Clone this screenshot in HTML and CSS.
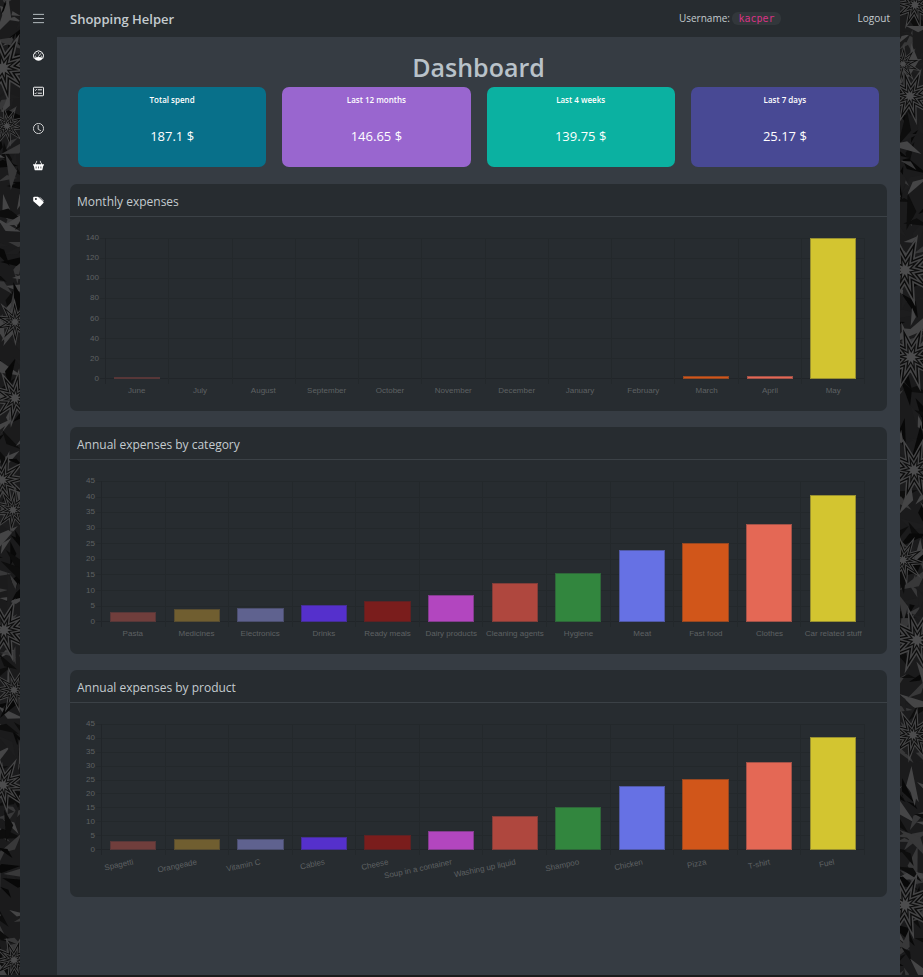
FILE: index.html
```html
<!DOCTYPE html>
<html lang="en">
<head>
<meta charset="utf-8">
<meta name="viewport" content="width=device-width, initial-scale=1">
<title>Shopping Helper</title>
<link rel="stylesheet" href="styles.css">
</head>
<body>
<svg class="backdrop" id="backdrop" aria-hidden="true"></svg>
<div class="app">
  <aside class="sidebar">
    <button class="toggle" type="button" aria-label="Menu">
      <svg class="icon" viewBox="0 0 16 16"><path d="M0 2h16M0 8h16M0 14h16" fill="none" stroke="currentColor" stroke-width="1.3"/></svg>
    </button>
    <nav class="side-nav" aria-label="Main">
      <a href="#dashboard" aria-label="Dashboard"><svg class="icon" viewBox="0 0 16 16"><path d="M1.8 12.5A7.3 7.3 0 1 1 14.2 12.5" fill="none" stroke="currentColor" stroke-width="1.4"/><path d="M1.5 11.2Q8 9.400 14.5 11.2Q12.500 15.600 8 15.600T1.500 11.200Z" fill="currentColor"/><path d="M8 3.200v2M4 5l1.400 1.400M2.600 9h2M11.400 9h2M7.600 9.800l4.200-5" fill="none" stroke="currentColor" stroke-width="1.2"/></svg></a>
      <a href="#list" aria-label="List"><svg class="icon" viewBox="0 0 16 16"><rect x=".7" y="1.800" width="14.600" height="12.400" rx="1.200" fill="none" stroke="currentColor" stroke-width="1.4"/><path d="M7 5.500h6M7 10.500h6M2.600 5.500l1 1 1.900-2M2.600 10.500l1 1 1.900-2" fill="none" stroke="currentColor" stroke-width="1.3"/></svg></a>
      <a href="#history" aria-label="History"><svg class="icon" viewBox="0 0 16 16"><circle cx="8" cy="8" r="7.400" fill="none" stroke="currentColor" stroke-width="1.1"/><path d="M7.500 3v6l4 2.300" fill="none" stroke="currentColor" stroke-width="1.1"/></svg></a>
      <a href="#products" aria-label="Products"><svg class="icon" viewBox="0 0 16 16"><path fill="currentColor" fill-rule="evenodd" d="M5.900 1.100a.5.5 0 0 1 .2.700L3.900 6H12.100L9.900 1.800a.5.5 0 0 1 .9-.5L13.200 6H15.500a.5.5 0 0 1 .5.500v1a.5.5 0 0 1-.5.500H15l-1.300 6a1.500 1.500 0 0 1-1.500 1H3.800a1.500 1.500 0 0 1-1.500-1L1 8H.5a.5.5 0 0 1-.5-.5v-1A.5.5 0 0 1 .5 6h2.300l2.400-4.700a.5.5 0 0 1 .7-.2ZM4 9.500v3h1v-3ZM7.500 9.500v3h1v-3ZM11 9.500v3h1v-3Z"/></svg></a>
      <a href="#categories" aria-label="Categories"><svg class="icon" viewBox="0 0 16 16"><path fill="currentColor" fill-rule="evenodd" d="M2 1h5a1 1 0 0 1 .7.300l7.400 7.200a1.300 1.300 0 0 1 0 1.800l-4.500 4.500a1.300 1.300 0 0 1-1.800 0L.6 7.700A1 1 0 0 1 .3 7V2.700A1.700 1.700 0 0 1 2 1Zm2.200 4.800a1.500 1.500 0 1 0 0-3 1.500 1.500 0 0 0 0 3Z"/><path d="M9.800 1.800l5.600 5.600" stroke="currentColor" stroke-width="1.200"/></svg></a>
    </nav>
  </aside>
  <header class="topbar">
    <a class="brand" href="#dashboard">Shopping Helper</a>
    <span class="user">Username: <code>kacper</code></span>
    <a class="logout" href="#logout">Logout</a>
  </header>
  <main class="content" id="dashboard">
    <h1>Dashboard</h1>
    <section class="stats" aria-label="Totals">
      <article class="stat total"><h2>Total spend</h2><p>187.1 $</p></article>
      <article class="stat year"><h2>Last 12 months</h2><p>146.65 $</p></article>
      <article class="stat month"><h2>Last 4 weeks</h2><p>139.75 $</p></article>
      <article class="stat week"><h2>Last 7 days</h2><p>25.17 $</p></article>
    </section>
    <section class="panel"><h2>Monthly expenses</h2><div class="chart wide-axis" id="monthly"></div></section>
    <section class="panel"><h2>Annual expenses by category</h2><div class="chart" id="category"></div></section>
    <section class="panel"><h2>Annual expenses by product</h2><div class="chart slanted" id="product"></div></section>
  </main>
</div>
<script src="app.js"></script>
</body>
</html>
```
FILE: styles.css
```css
* { box-sizing: border-box; }
body {
  margin: 0;
  background: #1b1b1c;
  color: #c4cbcf;
  font-family: "Open Sans", "Noto Sans", sans-serif;
  font-size: 10px;
  line-height: 16px;
}
h1, h2, p { margin: 0; }
a { color: inherit; text-decoration: none; }
.backdrop { position: fixed; inset: 0; z-index: -1; width: 100%; height: calc(100% - 2px); }
.app {
  display: grid;
  grid-template-columns: 37px minmax(0, 1fr);
  grid-template-rows: 37px 1fr;
  min-height: calc(100vh - 2px);
  margin: 0 23px 2px 20px;
  background: #363c43;
}
.sidebar { grid-row: 1 / 3; background: #272c30; }
.toggle {
  display: grid;
  place-items: center;
  width: 100%;
  height: 37px;
  padding: 0;
  border: 0;
  background: none;
  color: #c4cbcf;
}
.side-nav { display: grid; grid-auto-rows: 1fr; height: 183px; color: #fff; }
.side-nav a { display: grid; place-items: center; }
.icon { display: block; width: 11px; height: 11px; }
.topbar {
  display: flex;
  align-items: center;
  padding: 0 10px 2px 13px;
  background: #272c30;
}
.brand { margin-right: auto; padding-top: 2px; font-size: 13px; font-weight: 600; }
.user { margin-right: 77px; }
code {
  padding: 1px 6px;
  border-radius: 6px;
  background: #32373b;
  color: #d63384;
  font: 10px/12px "DejaVu Sans Mono", monospace;
}
.content { padding: 12px 13px; }
h1 {
  margin-bottom: 2px;
  color: #b9c2c9;
  font-size: 25px;
  font-weight: 600;
  line-height: 36px;
  text-align: center;
}
.stats {
  display: grid;
  grid-template-columns: repeat(4, 1fr);
  gap: 16px;
  margin: 0 8px 17px;
}
.stat { height: 80px; padding-top: 5px; border-radius: 7px; color: #fff; text-align: center; }
.stat h2 { font-size: 8px; font-weight: 600; line-height: 16px; }
.stat p { margin-top: 18px; font-size: 13px; line-height: 20px; }
.total { background: #08708a; }
.year { background: #9966cf; }
.month { background: #0bb1a1; }
.week { background: #484994; }
.panel { margin-bottom: 16px; border-radius: 7px; background: #272c30; }
.panel h2 {
  padding: 9px 7px 5px;
  border-bottom: 1px solid #3b4146;
  font-size: 12px;
  font-weight: 400;
  line-height: 18px;
}

.chart {
  display: grid;
  grid-template-columns: 31px minmax(0, 1fr);
  grid-template-rows: 141px 32px;
  padding: 21px 22px 0 0;
  color: #5e6163;
  font: 8px/10px "Liberation Sans", Arial, sans-serif;
}
.wide-axis { grid-template-columns: 35px minmax(0, 1fr); }
.slanted { grid-template-rows: 126px 47px; }
.axis, .lines, .bars { grid-row: 1; }
.axis {
  grid-column: 1;
  display: flex;
  flex-direction: column;
  justify-content: space-between;
  margin: -5px 6px -5px 0;
  text-align: right;
}
.lines, .bars { grid-column: 2; }
.lines { display: flex; flex-direction: column; margin-left: -5px; border-bottom: 1px solid #212529; }
.lines i { flex: 1; border-top: 1px solid #23282b; }
.bars { display: flex; margin-bottom: -5px; border-left: 1px solid #212529; }
.slot {
  flex: 1;
  display: flex;
  align-items: flex-end;
  justify-content: center;
  padding-bottom: 5px;
  border-right: 1px solid #23282b;
}
.bar { width: 74%; border: 1px solid rgb(39 44 48 / 35%); }
.names { grid-column: 2; display: flex; padding-top: 7px; }
.names span { flex: 1; min-width: 0; display: flex; justify-content: center; white-space: nowrap; }
.slanted .names span { justify-content: flex-end; padding-right: 28px; }
.slanted .names b { transform: rotate(-12deg); transform-origin: right center; }
.names b { font-weight: 400; }
```
FILE: app.js
```js
const colors = ["#703e3c", "#705e30", "#5f628f", "#5530cc", "#7a1d1c", "#b246bf",
  "#af473e", "#32863e", "#6671e4", "#d1561a", "#e46855", "#d3c530"];

function drawChart(id, max, step, names, values) {
  const ticks = [];
  for (let t = max; t >= 0; t -= step) ticks.push(t);
  document.getElementById(id).innerHTML =
    `<div class="axis">${ticks.map(t => `<span>${t}</span>`).join("")}</div>` +
    `<div class="lines">${ticks.slice(1).map(() => "<i></i>").join("")}</div>` +
    `<div class="bars">${values.map((v, i) => `<div class="slot">${v ?
      `<div class="bar" style="height:${v / max * 100}%;background-color:${colors[i]}"></div>` : ""}</div>`).join("")}</div>` +
    `<div class="names">${names.map(n => `<span><b>${n}</b></span>`).join("")}</div>`;
}

drawChart("monthly", 140, 20,
  ["June", "July", "August", "September", "October", "November", "December", "January", "February", "March", "April", "May"],
  [1.6, 0, 0, 0, 0, 0, 0, 0, 0, 2.6, 2.7, 139.75]);
drawChart("category", 45, 5,
  ["Pasta", "Medicines", "Electronics", "Drinks", "Ready meals", "Dairy products", "Cleaning agents", "Hygiene", "Meat", "Fast food", "Clothes", "Car related stuff"],
  [3.2, 4, 4.6, 5.3, 6.7, 8.7, 12.3, 15.5, 22.9, 25.3, 31.4, 40.4]);
drawChart("product", 45, 5,
  ["Spagetti", "Orangeade", "Vitamin C", "Cables", "Cheese", "Soup in a container", "Washing up liquid", "Shampoo", "Chicken", "Pizza", "T-shirt", "Fuel"],
  [3.2, 3.8, 4, 4.7, 5.3, 6.7, 12.3, 15.5, 22.9, 25.3, 31.4, 40.4]);

/* Dark field of shards and nested stars behind the app. */
let seed;
const rand = () => (seed = seed * 16807 % 2147483647) / 2147483647;

function star(cx, cy, r, points, turn, fill) {
  const p = [];
  for (let i = 0; i < points * 2; i++) {
    const a = turn + i * Math.PI / points;
    const d = i % 2 ? r * 0.42 : r;
    p.push((cx + d * Math.cos(a)).toFixed(1) + "," + (cy + d * Math.sin(a)).toFixed(1));
  }
  return `<polygon points="${p.join(" ")}" fill="${fill}"/>`;
}

function drawBackdrop() {
  seed = 11;
  const w = innerWidth, h = innerHeight;
  const greys = ["#080808", "#1d1d1e", "#383839", "#454546", "#0d0d0d"];
  let out = "";
  for (const edge of [8, w - 10]) {
    for (let y = -10; y < h + 20; y += 4) {
      const x = edge + rand() * 36 - 18, a = rand() * 6.3, l = 14 + rand() * 26;
      const dx = Math.cos(a) * l, dy = Math.sin(a) * l;
      out += `<polygon points="${x},${y} ${x + dx},${y + dy} ${x + dx * 0.5 - dy * 0.25},${y + dy * 0.5 + dx * 0.25}" fill="${greys[Math.floor(rand() * 5)]}"/>`;
    }
  }
  const stars = [[3, 68, 38], [7, 126, 21], [15, 322, 24], [15, 398, 30], [2, 480, 30], [13, 510, 24], [4, 630, 34],
    [14, 690, 24], [3, 785, 30], [14, 960, 24], [w - 8, 5, 26], [w - 20, 64, 20], [w - 13, 96, 30], [w - 18, 270, 38],
    [w - 12, 357, 36], [w - 9, 470, 34], [w - 20, 560, 26], [w - 6, 640, 36], [w - 10, 735, 28], [w - 18, 905, 36]];
  for (const [x, y, r] of stars) {
    const turn = rand() * 3;
    [[1, "#454546"], [0.8, "#0b0b0b"], [0.62, "#434344"], [0.42, "#0f0f0f"], [0.26, "#4c4c4d"]].forEach(([k, c]) => {
      out += star(x, y, r * k, 10, turn, c);
    });
  }
  document.getElementById("backdrop").innerHTML = out;
}
drawBackdrop();
addEventListener("resize", drawBackdrop);
```
